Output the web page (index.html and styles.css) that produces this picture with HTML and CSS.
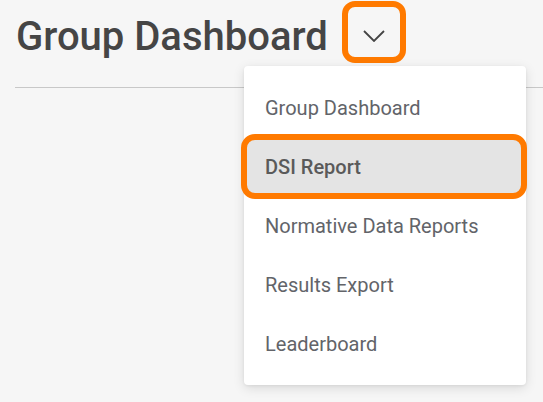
FILE: index.html
```html
<!DOCTYPE html>
<html lang="en">

<head>
  <meta charset="UTF-8">
  <meta name="viewport" content="width=device-width, initial-scale=1.0">
  <title>Group Dashboard</title>
  <link rel="stylesheet" href="styles.css">
</head>

<body>
  <div class="page">
    <header class="cabecera">
      <h1>Group Dashboard</h1>
      <button type="button" class="btn-menu" aria-label="Abrir menú">
        <svg width="22" height="12" viewBox="0 0 22 12">
          <polyline points="1,1 11,11 21,1" fill="none" stroke="#444" stroke-width="1.8" />
        </svg>
      </button>
    </header>

    <hr class="divisor">

    <ul class="menu">
      <li class="item">Group Dashboard</li>
      <li class="item activo">DSI Report</li>
      <li class="item">Normative Data Reports</li>
      <li class="item">Results Export</li>
      <li class="item">Leaderboard</li>
    </ul>
  </div>
</body>

</html>
```

FILE: styles.css
```css
body {
  margin: 0;
  background: #f6f6f6;
  font-family: Roboto, 'Liberation Sans', sans-serif;
  color: #454545;
}

.page {
  position: relative;
  height: 402px;
  overflow: hidden;
}

.cabecera {
  display: flex;
  align-items: flex-start;
  gap: 14px;
  padding: 1px 0 0 16px;
}

h1 {
  margin: 16px 0 0;
  font-size: 40px;
  line-height: 40px;
  font-weight: 500;
  color: #454545;
}

.btn-menu {
  width: 64px;
  height: 62px;
  box-sizing: border-box;
  border: 6px solid #ff7a00;
  border-radius: 13px;
  background: transparent;
  display: flex;
  align-items: center;
  justify-content: center;
  padding: 7px 0 0;
  cursor: pointer;
}

.divisor {
  margin: 24px 0 0 15px;
  border: none;
  border-top: 1px solid #c8c8c8;
}

/* menú desplegable */
.menu {
  position: absolute;
  top: 66px;
  left: 244px;
  width: 282px;
  box-sizing: border-box;
  margin: 0;
  padding: 12px 0;
  list-style: none;
  background: #fff;
  border-radius: 4px;
  box-shadow: 0 3px 12px rgba(0, 0, 0, 0.12), 0 1px 3px rgba(0, 0, 0, 0.06);
}

.item {
  position: relative;
  height: 59px;
  display: flex;
  align-items: center;
  padding-left: 21px;
  font-size: 20px;
  color: #626469;
}

.activo {
  z-index: 0;
  font-weight: 500;
  color: #5a5a5a;
}

.activo::before {
  content: '';
  position: absolute;
  top: -3px;
  bottom: -3px;
  left: -3px;
  right: -1px;
  border: 6px solid #ff7a00;
  border-radius: 14px;
  background: #e4e4e4;
  z-index: -1;
}
```
